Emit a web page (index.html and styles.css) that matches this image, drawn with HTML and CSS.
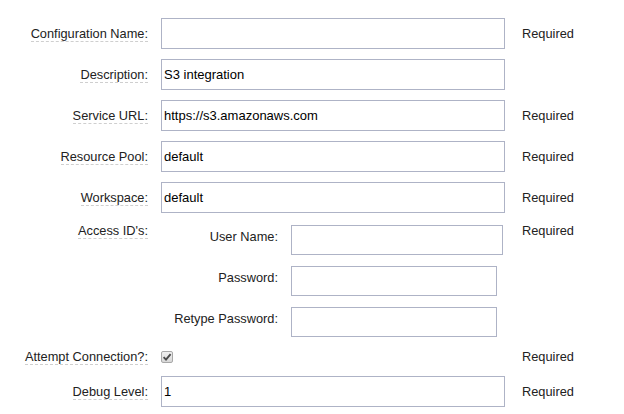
FILE: index.html
```html
<!DOCTYPE html>
<html>
<head>
<meta charset="utf-8">
<link rel="stylesheet" href="styles.css">
</head>
<body>
<form class="form">
  <div class="lbl"><span class="tip">Configuration Name:</span></div>
  <input class="field" type="text" value="">
  <div class="req">Required</div>

  <div class="lbl"><span class="tip">Description:</span></div>
  <input class="field" type="text" value="S3 integration">
  <div class="req"></div>

  <div class="lbl"><span class="tip">Service URL:</span></div>
  <input class="field" type="text" value="https://s3.amazonaws.com">
  <div class="req">Required</div>

  <div class="lbl"><span class="tip">Resource Pool:</span></div>
  <input class="field" type="text" value="default">
  <div class="req">Required</div>

  <div class="lbl"><span class="tip">Workspace:</span></div>
  <input class="field" type="text" value="default">
  <div class="req">Required</div>

  <div class="lbl top"><span class="tip">Access ID's:</span></div>
  <div class="sub">
    <div class="sublbl">User Name:</div>
    <input class="field subfield wide" type="text" value="">
    <div class="sublbl">Password:</div>
    <input class="field subfield" type="password" value="">
    <div class="sublbl">Retype Password:</div>
    <input class="field subfield" type="password" value="">
  </div>
  <div class="req top">Required</div>

  <div class="lbl"><span class="tip">Attempt Connection?:</span></div>
  <div class="checkcell"><span class="check"><svg width="10" height="10" viewBox="0 0 10 10"><path d="M1.6 5.2 L4 7.6 L8.6 2.2" fill="none" stroke="#4a4a4a" stroke-width="1.9"/></svg></span></div>
  <div class="req">Required</div>

  <div class="lbl"><span class="tip">Debug Level:</span></div>
  <input class="field" type="text" value="1">
  <div class="req">Required</div>
</form>
</body>
</html>
```
FILE: styles.css
```css
html, body {
  margin: 0;
  padding: 0;
  background: #fff;
}
body {
  font-family: "Liberation Sans", Arial, sans-serif;
  font-size: 12.8px;
  line-height: 15px;
  color: #222;
}
.form {
  display: grid;
  grid-template-columns: 148px 344px auto;
  column-gap: 13px;
  row-gap: 10px;
  padding-top: 18px;
  align-items: center;
}
.lbl {
  text-align: right;
}
.tip {
  display: inline-block;
  border-bottom: 1px dashed #cfcfcf;
}
.top {
  align-self: start;
  padding-top: 0;
}
.req {
  padding-left: 4px;
}
.field {
  box-sizing: border-box;
  height: 31px;
  width: 344px;
  margin: 0;
  border: 1px solid #aeb3c6;
  padding: 0 2px;
  font-family: "Liberation Sans", Arial, sans-serif;
  font-size: 13px;
  color: #000;
  background: #fff;
  outline: none;
}
.sub {
  display: grid;
  grid-template-columns: 117px auto;
  column-gap: 13px;
  row-gap: 11px;
  padding-top: 2px;
  align-items: start;
}
.sublbl {
  text-align: right;
  padding-top: 4px;
}
.subfield {
  height: 30px;
  width: 206px;
}
.subfield.wide {
  width: 212px;
}
.checkcell {
  height: 19px;
  display: flex;
  align-items: center;
}
.check {
  box-sizing: border-box;
  width: 12px;
  height: 12px;
  border: 1px solid #a8a8a8;
  border-radius: 2px;
  background: linear-gradient(#f0f0f0, #d8d8d8);
  display: flex;
  align-items: center;
  justify-content: center;
}
.check svg {
  display: block;
}
```
